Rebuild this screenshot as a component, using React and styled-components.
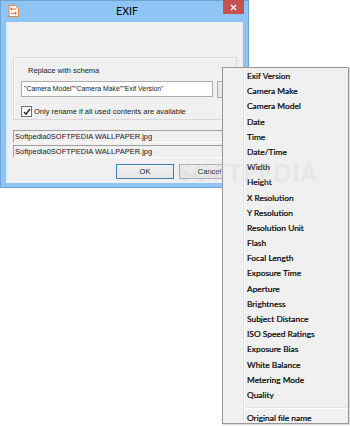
import React from "react";
import styled, { createGlobalStyle } from "styled-components";

const Global = createGlobalStyle`
  html, body {
    margin: 0;
    padding: 0;
    background: #ffffff;
  }
  body {
    font-family: Lato, 'Liberation Sans', sans-serif;
    font-size: 8.4px;
    color: #000;
  }
`;

const Stage = styled.div`
  position: relative;
  width: 350px;
  height: 426px;
  overflow: hidden;
  background: #ffffff;
`;

const Window = styled.div`
  width: 249px;
  height: 188px;
  box-sizing: border-box;
  background: #8fc5f4;
  border: 1px solid #6ea4d4;
  display: flex;
  flex-direction: column;
`;

const TitleBar = styled.div`
  height: 21px;
  display: flex;
  align-items: flex-start;
`;

const AppIcon = styled.svg`
  margin: 4px 0 0 7px;
  width: 11px;
  height: 12px;
`;

const Title = styled.div`
  flex: 1;
  text-align: center;
  font-size: 10.5px;
  line-height: 21px;
  color: #000;
  padding-left: 12px;
`;

const CloseButton = styled.div`
  width: 21px;
  height: 14px;
  margin-right: 4px;
  margin-top: -1px;
  background: #c75050;
  display: flex;
  align-items: center;
  justify-content: center;
`;

const Client = styled.div`
  flex: 1;
  margin: 0 5px 4px 5px;
  background: #f0f0f0;
  border-left: 1px solid #d9e6f3;
  padding: 35px 6px 0 6px;
  display: flex;
  flex-direction: column;
  font-family: 'Liberation Sans', Arial, sans-serif;
  font-size: 7.5px;
  color: #1a1a1a;
`;

const GroupBox = styled.div`
  height: 63px;
  box-sizing: border-box;
  border: 1px solid #d8d8d8;
  box-shadow: inset 1px 1px 0 #ffffff;
  padding: 7px 7px 0 7px;
  display: flex;
  flex-direction: column;
`;

const Label = styled.div`
  padding-left: 7px;
  line-height: 12px;
`;

const SchemaRow = styled.div`
  margin-top: 4px;
  display: flex;
  gap: 4px;
`;

const TextInput = styled.div`
  width: 192px;
  height: 16px;
  box-sizing: border-box;
  background: #fff;
  border: 1px solid #adadad;
  padding-left: 2px;
  font-size: 6.9px;
  line-height: 14px;
  white-space: nowrap;
  overflow: hidden;
`;

const SmallButton = styled.div`
  width: 12px;
  height: 17px;
  box-sizing: border-box;
  border: 1px solid #acacac;
  background: linear-gradient(#f0f0f0, #e5e5e5);
`;

const CheckRow = styled.div`
  margin-top: 8px;
  display: flex;
  align-items: center;
  gap: 2px;
  white-space: nowrap;
`;

const CheckBox = styled.div`
  width: 9px;
  height: 9px;
  border: 1px solid #707070;
  background: #fff;
  display: flex;
  align-items: center;
  justify-content: center;
`;

const FileRow = styled.div`
  margin-top: ${(p) => p.$gap}px;
  height: 13px;
  box-sizing: border-box;
  border-top: 1px solid #a0a0a0;
  border-left: 1px solid #a0a0a0;
  border-bottom: 1px solid #fff;
  padding-left: 1px;
  line-height: 12px;
  white-space: nowrap;
  overflow: hidden;
  margin-right: -10px;
`;

const ButtonRow = styled.div`
  margin-top: 6px;
  display: flex;
  gap: 5px;
  padding-left: 103px;
`;

const Button = styled.div`
  width: ${(p) => p.$w}px;
  height: 15px;
  flex-shrink: 0;
  box-sizing: border-box;
  border: 1px solid ${(p) => (p.$default ? "#3c7fb1" : "#acacac")};
  background: linear-gradient(#f0f0f0, #e5e5e5);
  text-align: center;
  line-height: 13px;
`;

const Menu = styled.div`
  position: absolute;
  left: 222px;
  top: 67px;
  width: 127px;
  height: 357px;
  box-sizing: border-box;
  background: #f0f0f0;
  border: 1px solid #979797;
  box-shadow: 1px 1px 1px rgba(0, 0, 0, 0.15);
  padding-top: 1px;
  &::before {
    content: "";
    position: absolute;
    left: 20px;
    top: 1px;
    bottom: 1px;
    width: 1px;
    background: #e2e3e3;
    box-shadow: 1px 0 0 #ffffff;
  }
`;

const MenuItem = styled.div`
  height: 15.2px;
  line-height: 15.2px;
  padding-left: 24px;
  white-space: nowrap;
  -webkit-text-stroke: 0.2px #000;
`;

const Separator = styled.div`
  margin: 4px 0 2px 21px;
  height: 1px;
  background: #e2e3e3;
  border-bottom: 1px solid #ffffff;
`;

const Watermark = styled.div`
  position: absolute;
  left: 178px;
  top: 158px;
  font-size: 24px;
  font-weight: 700;
  letter-spacing: 1px;
  color: rgba(255, 255, 255, 0.3);
  text-shadow: 0 0 1px rgba(0, 0, 0, 0.08);
  pointer-events: none;
`;

const tags = [
  "Exif Version",
  "Camera Make",
  "Camera Model",
  "Date",
  "Time",
  "Date/Time",
  "Width",
  "Height",
  "X Resolution",
  "Y Resolution",
  "Resolution Unit",
  "Flash",
  "Focal Length",
  "Exposure Time",
  "Aperture",
  "Brightness",
  "Subject Distance",
  "ISO Speed Ratings",
  "Exposure Bias",
  "White Balance",
  "Metering Mode",
  "Quality",
];

export default function App() {
  return (
    <Stage>
      <Global />
      <Window>
        <TitleBar>
          <AppIcon viewBox="0 0 11 12">
            <path d="M1 0.5h6.5l3 3v8h-9.5z" fill="#fff" stroke="#e8833a" />
            <path d="M2.5 4h6M2.5 4l1.5-1.3M2.5 4l1.5 1.3" stroke="#e8702a" strokeWidth="1.1" fill="none" />
            <path d="M8.5 8.2h-6M8.5 8.2l-1.5-1.3M8.5 8.2l-1.5 1.3" stroke="#e8702a" strokeWidth="1.1" fill="none" />
          </AppIcon>
          <Title>EXIF</Title>
          <CloseButton>
            <svg width="7" height="7" viewBox="0 0 7 7">
              <path d="M1 1l5 5M6 1l-5 5" stroke="#fff" strokeWidth="1.4" />
            </svg>
          </CloseButton>
        </TitleBar>
        <Client>
          <GroupBox>
            <Label>Replace with schema</Label>
            <SchemaRow>
              <TextInput>"Camera Model""Camera Make""Exif Version"</TextInput>
              <SmallButton />
            </SchemaRow>
            <CheckRow>
              <CheckBox>
                <svg width="8" height="8" viewBox="0 0 8 8">
                  <path d="M1 4l2 2.2L7 1" stroke="#222" strokeWidth="1.4" fill="none" />
                </svg>
              </CheckBox>
              Only rename if all used contents are available
            </CheckRow>
          </GroupBox>
          <FileRow $gap={10}>Softpedia0SOFTPEDIA WALLPAPER.jpg</FileRow>
          <FileRow $gap={2}>Softpedia0SOFTPEDIA WALLPAPER.jpg</FileRow>
          <ButtonRow>
            <Button $w={58} $default>OK</Button>
            <Button $w={61}>Cancel</Button>
          </ButtonRow>
        </Client>
      </Window>
      <Menu>
        {tags.map((t) => (
          <MenuItem key={t}>{t}</MenuItem>
        ))}
        <Separator />
        <MenuItem>Original file name</MenuItem>
      </Menu>
      <Watermark>SOFTPEDIA</Watermark>
    </Stage>
  );
}
